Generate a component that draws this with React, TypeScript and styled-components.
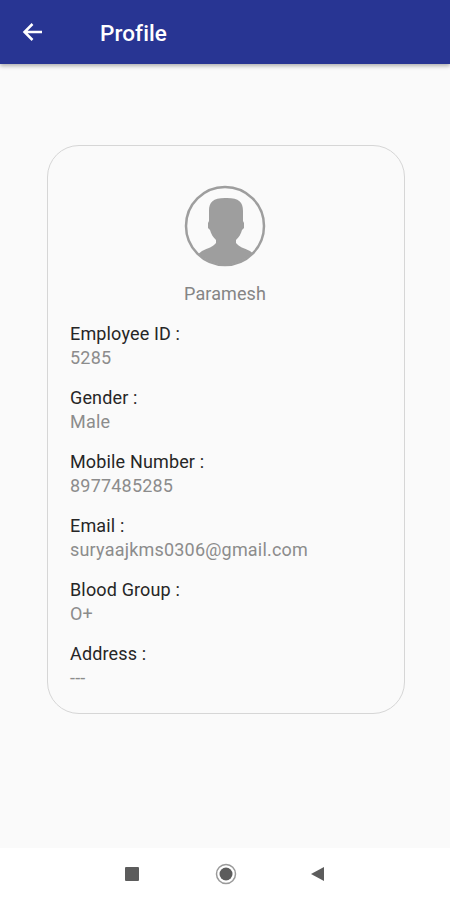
import React, { FC } from "react";
import styled, { createGlobalStyle } from "styled-components";

const GlobalStyle = createGlobalStyle`
  html, body {
    margin: 0;
    padding: 0;
    background: #fafafa;
    font-family: Roboto, "Liberation Sans", sans-serif;
  }
`;

const StyledPage = styled.div`
  width: 450px;
  height: 900px;
  display: flex;
  flex-direction: column;
  overflow: hidden;
  background: #fafafa;
`;

const StyledAppBar = styled.header`
  height: 64px;
  flex-shrink: 0;
  display: flex;
  align-items: center;
  padding-left: 21px;
  background: #283593;
  box-shadow: 0 2px 4px rgba(0, 0, 0, 0.3);
  color: #fff;
`;

const StyledTitle = styled.h1`
  margin: 2px 0 0 55px;
  font-size: 22.500px;
  font-weight: 500;
  letter-spacing: 0.1px;
`;

const StyledContent = styled.main`
  flex: 1;
  padding: 81px 45px 0 47px;
`;

const StyledCard = styled.section`
  height: 569px;
  box-sizing: border-box;
  padding: 39px 24px 0 22px;
  border: 1px solid #d6d6d6;
  border-radius: 32px;
  background: #fafafa;
`;

const StyledAvatar = styled.div`
  width: 82px;
  height: 82px;
  margin: 0 auto;
`;

const StyledName = styled.div`
  margin: 14px 0 15px;
  text-align: center;
  font-size: 18px;
  line-height: 25px;
  color: #858585;
  letter-spacing: 0.1px;
`;

const StyledField = styled.div`
  margin-bottom: 15px;
  font-size: 18px;
  line-height: 25px;
`;

const StyledLabel = styled.div`
  color: #262626;
  letter-spacing: 0.15px;
`;

const StyledValue = styled.div`
  margin-top: -1px;
  color: #8c8c8c;
  letter-spacing: 0.2px;
`;

const StyledNavBar = styled.nav`
  height: 52px;
  flex-shrink: 0;
  display: grid;
  grid-template-columns: 94px 94px 90px;
  justify-content: start;
  justify-items: center;
  align-items: center;
  padding-left: 85px;
  background: #fff;
`;

const fields: { label: string; value: string }[] = [
  { label: "Employee ID :", value: "5285" },
  { label: "Gender :", value: "Male" },
  { label: "Mobile Number :", value: "8977485285" },
  { label: "Email :", value: "suryaajkms0306@gmail.com" },
  { label: "Blood Group :", value: "O+" },
  { label: "Address :", value: "---" },
];

const AvatarIcon: FC = () => (
  <svg width="82" height="82" viewBox="0 0 82 82">
    <defs>
      <clipPath id="avatar-clip">
        <circle cx="41" cy="41" r="38.5" />
      </clipPath>
    </defs>
    <path
      clipPath="url(#avatar-clip)"
      fill="#9e9e9e"
      d="M41 13C29 13 25 17 25 26v10l-1 2v5l2 2c1 4 3 7 6 10v3c-3 4-8 5-14 8l-5 4v14h58V70l-5-4c-6-3-11-4-14-8v-3c3-3 5-6 6-10l2-2v-5l-1-2V26c0-9-4-13-16-13z"
    />
    <circle cx="41" cy="41" r="39" fill="none" stroke="#9e9e9e" strokeWidth="2.500" />
  </svg>
);

const BackArrow: FC = () => (
  <svg width="24" height="24" viewBox="0 0 24 24" fill="none">
    <path d="M21 12H4M11.500 4L3.500 12l8 8" stroke="#fff" strokeWidth="2.500" />
  </svg>
);

const RecentsIcon: FC = () => (
  <svg width="16" height="16" viewBox="0 0 16 16">
    <rect x="1" y="1" width="14" height="14" rx="1" fill="#5c5c5c" />
  </svg>
);

const HomeIcon: FC = () => (
  <svg width="24" height="24" viewBox="0 0 24 24">
    <circle cx="12" cy="12" r="9.500" fill="none" stroke="#9a9a9a" strokeWidth="1.500" />
    <circle cx="12" cy="12" r="6.500" fill="#5c5c5c" />
  </svg>
);

const BackIcon: FC = () => (
  <svg width="16" height="16" viewBox="0 0 16 16">
    <path d="M1 8l13-7v14z" fill="#5c5c5c" />
  </svg>
);

export default function App() {
  return (
    <StyledPage>
      <GlobalStyle />
      <StyledAppBar>
        <BackArrow />
        <StyledTitle>Profile</StyledTitle>
      </StyledAppBar>
      <StyledContent>
        <StyledCard>
          <StyledAvatar>
            <AvatarIcon />
          </StyledAvatar>
          <StyledName>Paramesh</StyledName>
          {fields.map((field) => (
            <StyledField key={field.label}>
              <StyledLabel>{field.label}</StyledLabel>
              <StyledValue>{field.value}</StyledValue>
            </StyledField>
          ))}
        </StyledCard>
      </StyledContent>
      <StyledNavBar>
        <RecentsIcon />
        <HomeIcon />
        <BackIcon />
      </StyledNavBar>
    </StyledPage>
  );
}
